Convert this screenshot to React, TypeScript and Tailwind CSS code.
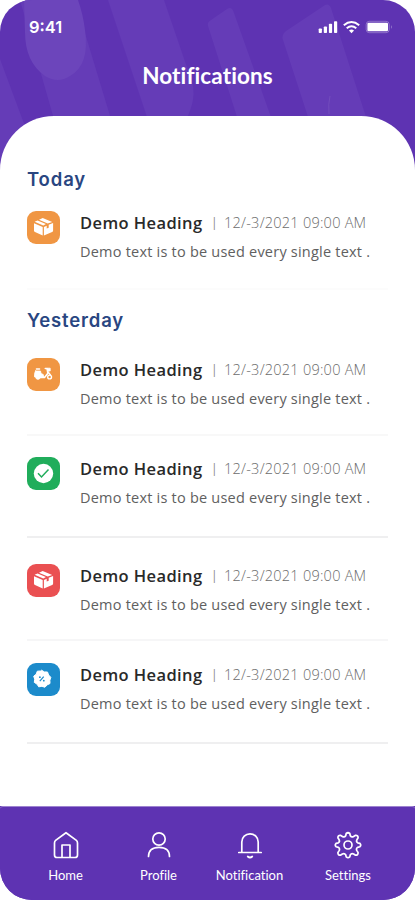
import React from "react";

type IconName = "box" | "scooter" | "check" | "discount";

interface NotificationItem {
  id: number;
  icon: IconName;
  color: string;
  rowClass: string;
  lineClass: string;
}

const today: NotificationItem[] = [
  { id: 1, icon: "box", color: "bg-[#f09643]", rowClass: "pt-[19px] h-[98px]", lineClass: "border-[#fcfcfc]" },
];

const yesterday: NotificationItem[] = [
  { id: 2, icon: "scooter", color: "bg-[#f09643]", rowClass: "pt-[26px] h-[104px]", lineClass: "border-[#f8f8f8]" },
  { id: 3, icon: "check", color: "bg-[#20ad5b]", rowClass: "pt-[21px] h-[102px]", lineClass: "border-[#efeff0]" },
  { id: 4, icon: "box", color: "bg-[#ea5052]", rowClass: "pt-[26px] h-[103px]", lineClass: "border-[#f6f6f7]" },
  { id: 5, icon: "discount", color: "bg-[#1c8bcb]", rowClass: "pt-[22px] h-[103px]", lineClass: "border-[#efeff0]" },
];

const BoxGlyph = () => (
  <svg viewBox="0 0 33 33" className="size-full" fill="white">
    <path d="M7.600 10.800 10.600 9.400l8.300 3.700-2.600 1.500zM12 8.700 15.700 7.100l9.500 3.800-4.500 1.600z" />
    <path d="M7 12.200 15.700 16v8.500L8 21q-1-.5-1-1.500zM16.900 16l2.800-1.300v2.900l2-.9v-2.900l4.400-1.800v7.500q0 1-1 1.600l-8.200 3.400z" />
  </svg>
);

const ScooterGlyph = () => (
  <svg viewBox="0 0 33 33" className="size-full" fill="none" stroke="white" strokeLinecap="round" strokeLinejoin="round">
    <path d="M9.500 11h3" strokeWidth="1.600" />
    <path d="M8.500 13h5l.6 2.600 2.100.8.6 2.500H7.500v-2q0-1.900 1-3.900z" fill="white" strokeWidth=".8" />
    <circle cx="11" cy="19" r="2.300" fill="white" />
    <path d="M12 19.400h5.500l3.400-4.100-.8-4.800h-1.800" strokeWidth="1.600" />
    <path d="M20.600 10.200h2.600V13h-2.200z" fill="white" strokeWidth=".8" />
    <path d="m21 14 2.400 3" strokeWidth="1.500" />
    <circle cx="22.600" cy="19" r="1.900" strokeWidth="1.400" />
  </svg>
);

const CheckGlyph = () => (
  <svg viewBox="0 0 33 33" className="size-full">
    <circle cx="16.500" cy="16.500" r="9.700" fill="white" />
    <path d="m11 16.300 3.500 3.600 7-7.400" fill="none" stroke="#20ad5b" strokeWidth="1.500" />
  </svg>
);

const DiscountGlyph = () => (
  <svg viewBox="0 0 33 33" className="size-full">
    <path
      d="m15 7 2.700 1.700 3.200.1 1.100 3 2.200 2.300-.9 3 .1 3.200-2.900 1.400-2.100 2.300-3.200-.8-3.100.4-1.700-2.700-2.700-1.700.4-3.200-1-3 2.500-2 1.100-3 3.200-.2z"
      transform="translate(-.4 .2)"
      fill="white"
      stroke="white"
      strokeLinejoin="round"
    />
    <path d="m12.800 18.200 3.900-4.600" stroke="#1c8bcb" strokeWidth="1.200" />
    <circle cx="12.900" cy="14.200" r=".9" fill="#1c8bcb" />
    <circle cx="16.800" cy="17.700" r=".9" fill="#1c8bcb" />
  </svg>
);

const glyphs: Record<IconName, React.ReactNode> = {
  box: <BoxGlyph />,
  scooter: <ScooterGlyph />,
  check: <CheckGlyph />,
  discount: <DiscountGlyph />,
};

const NotificationRow: React.FC<{ item: NotificationItem }> = ({ item }) => (
  <li className={`flex border-b-2 ${item.rowClass} ${item.lineClass}`}>
    <div className={`size-[33px] shrink-0 rounded-[9px] ${item.color}`}>{glyphs[item.icon]}</div>
    <div className="ml-5 whitespace-nowrap font-['Open_Sans',sans-serif]">
      <div className="flex h-6 items-center">
        <h3 className="w-[131px] text-[16.5px] font-semibold tracking-[0.4px] text-[#292929]">Demo Heading</h3>
        <span className="w-[13px] text-[12px] text-[#8a8a8a]">|</span>
        <span className="text-[14.5px] font-light tracking-[0.24px] text-[#6c6c6c]">12/-3/2021 09:00 AM</span>
      </div>
      <p className="mt-[5px] text-[14.5px] leading-6 tracking-[0.22px] text-[#606060]">
        Demo text is to be used every single text .
      </p>
    </div>
  </li>
);

const navItems = [
  {
    label: "Home",
    width: "w-[95px]",
    icon: <path d="M14 1.700 3.600 9.400Q2.500 10.300 2.500 12v12q0 2.500 2.500 2.500h18q2.500 0 2.500-2.500V12q0-1.700-1.100-2.600zM10 26V14h8v12" />,
  },
  {
    label: "Profile",
    width: "w-[91px]",
    icon: (
      <>
        <circle cx="14" cy="8" r="6.200" />
        <path d="M3.500 25.500q0-9.200 10.500-9.200t10.500 9.200" />
      </>
    ),
  },
  {
    label: "Notification",
    width: "w-[91px]",
    icon: (
      <>
        <path d="M2.800 21.500h22.400M5.800 21.500V11a8.200 8.200 0 0 1 16.400 0v10.500" />
        <path d="M11.700 25.500q2.300 2 4.600 0" />
      </>
    ),
  },
  {
    label: "Settings",
    width: "w-[106px]",
    icon: (
      <>
        <circle cx="14" cy="14" r="4" />
        <path d="M12.200 2.500q1.800-1.500 3.600 0l.5 2.300q1.300 1.900 3.300.7l2-1.200q2.500-.2 2.500 2.500l-1.200 2q-1 2 .8 3l2.200.5q1.600 1.700 0 3.500l-2.300.6q-1.800 1.200-.7 3.200l1.200 2q.1 2.700-2.500 2.600l-2-1.200q-2-1.100-3.300.7l-.5 2.200q-1.800 1.500-3.600 0l-.5-2.200q-1.300-1.800-3.300-.7l-2 1.200q-2.600.1-2.500-2.600l1.200-2q1.100-2-.7-3.200l-2.300-.6q-1.600-1.800 0-3.500l2.200-.5q1.800-1 .8-3l-1.200-2q0-2.700 2.500-2.500l2 1.200q2 1.200 3.300-.7z" />
      </>
    ),
  },
];

const HeaderPattern = () => (
  <svg className="absolute left-0 top-0" width="415" height="172" viewBox="0 0 415 172" fill="#653cb7">
    <path d="M0 59 42 172H0z" />
    <path d="M20 0h55l52 172H69z" />
    <path d="M108 0h56l28 82q5 16-6 38h-38z" />
    <path d="M208 26q-1-4 3-6l16-11q5-3 7 4l38 107h-34z" />
    <path d="M283 40q-2-5 3-9l39-26q4-2 6 3l36 112h-58z" />
    <path d="M24 0h54q5 14 7 30 5 35-15 46-12 8-25 0-20-14-20-44z" fill="#6c45bb" />
    <path d="M330 96q-2 8-1 18" fill="none" stroke="#7650be" strokeWidth=".8" />
  </svg>
);

const StatusIcons = () => (
  <svg width="75" height="16" viewBox="0 0 75 16" fill="white">
    <rect x=".7" y="9.500" width="3.200" height="4.500" rx=".8" />
    <rect x="5.800" y="7.500" width="3.200" height="6.500" rx=".8" />
    <rect x="10.900" y="4.700" width="3.200" height="9.300" rx=".8" />
    <rect x="16" y="2.300" width="3.200" height="11.700" rx=".8" />
    <g fill="none" stroke="white" strokeWidth="2">
      <path d="M25.800 6.200q7.700-6.400 15.400 0" />
      <path d="M28.700 9.200q4.800-3.800 9.600 0" />
    </g>
    <path d="M31 11.400q2.500-2 5 0l-2.500 2.900z" />
    <rect x="48.200" y="2.300" width="23" height="11.400" rx="3.200" fill="none" stroke="white" opacity=".3" />
    <rect x="49.400" y="3.800" width="20.600" height="8.400" rx="1.200" />
    <path d="M73 6q1.700 2 0 4z" opacity=".4" />
  </svg>
);

export default function App() {
  return (
    <div className="h-[900px] w-[415px] bg-white">
      <div className="relative flex h-full flex-col overflow-hidden rounded-[32px] bg-[#5e33b2]">
        <HeaderPattern />

        {/* Header */}
        <header className="relative h-[116px] shrink-0 text-white">
          <div className="flex h-[54px] items-center justify-between pl-[29px] pr-[22px]">
            <span className="font-['Inter',sans-serif] text-[16.5px] font-semibold">9:41</span>
            <StatusIcons />
          </div>
          <h1 className="mt-2 text-center font-['Lato',sans-serif] text-[22.5px] font-bold leading-7 tracking-[0.1px] [font-variant-ligatures:none]">
            Notifications
          </h1>
        </header>

        {/* Notification list */}
        <main className="relative h-[690px] shrink-0 rounded-t-[54px] bg-white px-[27px] pt-[51px]">
          <h2 className="h-[25px] font-['Inter',sans-serif] text-[18.5px] font-semibold leading-[25px] tracking-[0.85px] text-[#294681]">
            Today
          </h2>
          <ul>
            {today.map((item) => (
              <NotificationRow key={item.id} item={item} />
            ))}
          </ul>
          <h2 className="mt-[18px] h-[24px] font-['Inter',sans-serif] text-[18.5px] font-semibold leading-[25px] tracking-[0.85px] text-[#294681]">
            Yesterday
          </h2>
          <ul>
            {yesterday.map((item) => (
              <NotificationRow key={item.id} item={item} />
            ))}
          </ul>
        </main>

        {/* Bottom navigation */}
        <nav className="relative flex h-[94px] shrink-0 rounded-t-[3px] border-t border-[#9d83d0] bg-[#5e33b2] pl-[18px] pt-6 text-white">
          {navItems.map((item) => (
            <a key={item.label} className={`flex flex-col items-center ${item.width}`}>
              <svg
                width="28"
                height="28"
                viewBox="0 0 28 28"
                fill="none"
                stroke="currentColor"
                strokeWidth="1.700"
                strokeLinecap="round"
                strokeLinejoin="round"
              >
                {item.icon}
              </svg>
              <span className="mt-[8px] font-['Lato',sans-serif] text-[13px] leading-4 [font-variant-ligatures:none]">
                {item.label}
              </span>
            </a>
          ))}
        </nav>
      </div>
    </div>
  );
}
